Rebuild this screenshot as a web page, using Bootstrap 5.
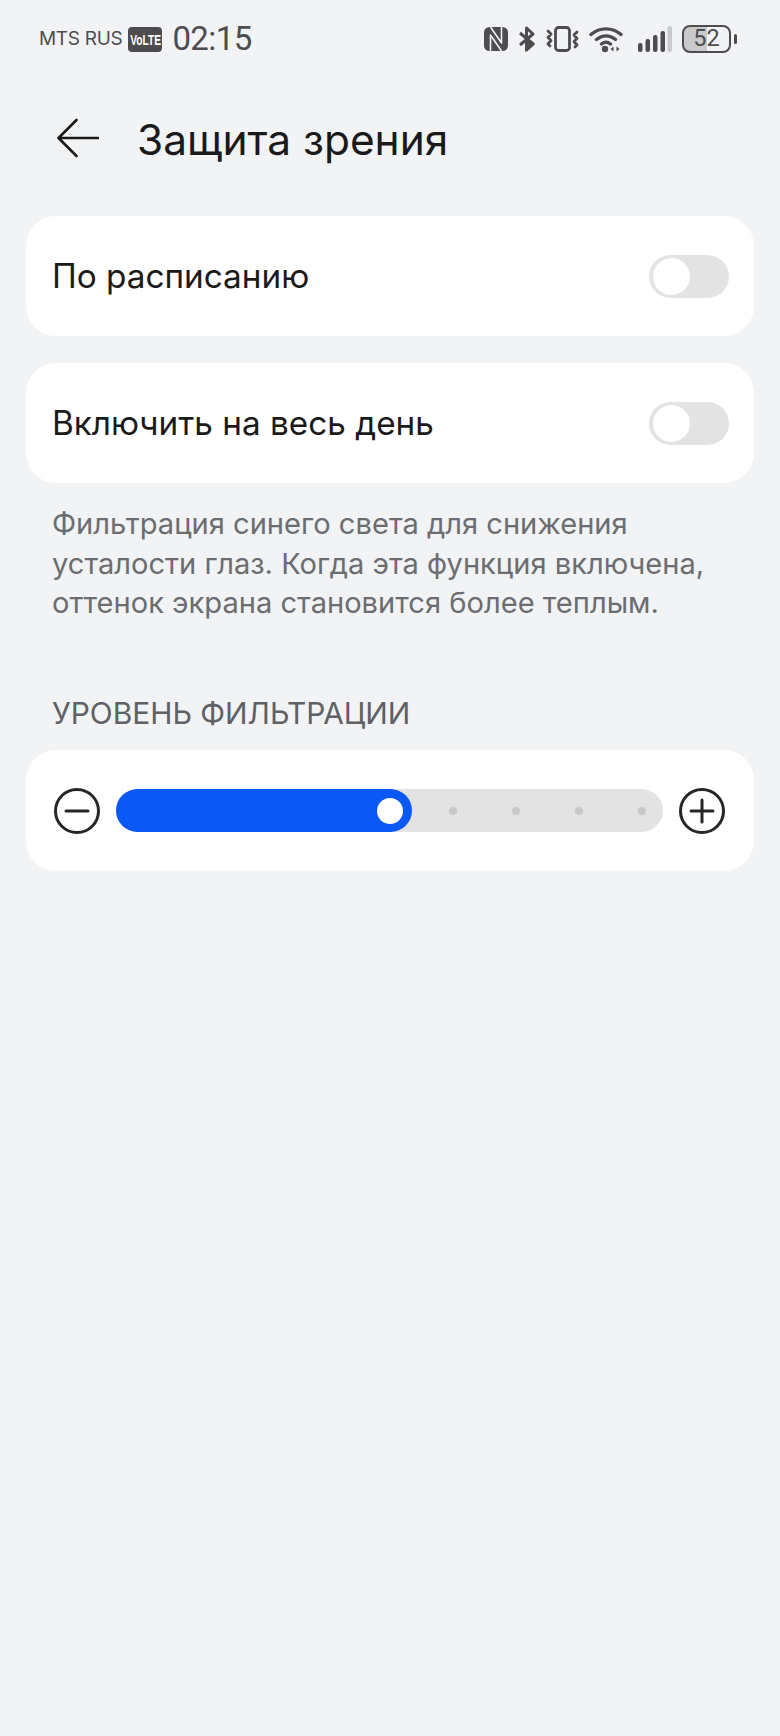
<!DOCTYPE html>
<html lang="ru">
<head>
  <meta charset="UTF-8">
  <meta name="viewport" content="width=device-width, initial-scale=1.0">
  <title>Защита зрения</title>
  <link href="https://cdn.jsdelivr.net/npm/bootstrap@5.3.0/dist/css/bootstrap.min.css" rel="stylesheet">
  <style>
    body {
      background: #f1f3f5;
      font-family: Inter, "Noto Sans", sans-serif;
      color: #1a1a1a;
      min-height: 1736px;
    }
    .status-bar {
      height: 78px;
      padding: 0 43px 0 39px;
      color: #4d4d4f;
    }
    .carrier { font-size: 19px; letter-spacing: -0.3px; }
    .volte {
      width: 34px;
      height: 25px;
      margin: 0 10px 0 6px;
      background: #4d4d4f;
      color: #fff;
      border-radius: 4px;
      overflow: hidden;
      font: 700 15px/25px "Liberation Sans", sans-serif;
    }
    .volte span { display: block; transform: scaleX(0.68); white-space: nowrap; }
    .clock { font-family: Roboto, sans-serif; font-size: 33px; letter-spacing: -0.6px; }
    .sys-icons { gap: 10px; }
    .signal-icon { margin-left: 3px; }
    .battery {
      width: 49px;
      height: 28px;
      border: 2.500px solid #4d4d4f;
      border-radius: 8px;
      font: 400 23.500px/23px Roboto, sans-serif;
      text-align: center;
      background: linear-gradient(90deg, #c9cacc 52%, transparent 52%);
    }
    .battery-nub {
      width: 3px;
      height: 10px;
      margin-left: 3px;
      background: #4d4d4f;
      border-radius: 2px;
    }
    .top-bar {
      height: 124px;
      margin-bottom: 14px;
      padding-left: 57px;
    }
    .top-bar h1 {
      margin: 0 0 0 38px;
      font-size: 42.400px;
      font-weight: 400;
    }
    .panel {
      margin: 0 26px 27px;
      height: 120px;
      background: #fff;
      border-radius: 30px;
      padding: 0 25px 0 26px;
    }
    .panel-label { font-size: 33.300px; padding-top: 2px; }
    .toggle-off {
      width: 80px;
      height: 43px;
      padding: 3px 0 3px 4px;
      background: #e3e3e3;
      border-radius: 22px;
    }
    .toggle-off span {
      display: block;
      width: 37px;
      height: 37px;
      background: #fff;
      border-radius: 50%;
    }
    .hint {
      margin: -6px 52px 0;
      font-size: 29.100px;
      line-height: 39.500px;
      color: #6b6d70;
    }
    .section-title {
      margin: 70.500px 52px 17px;
      font-size: 29.900px;
      line-height: 40px;
      color: #5f6165;
    }
    .level-panel { height: 121px; padding: 0 29px 0 28px; gap: 16px; }
    .level-track {
      height: 43px;
      background: #e3e3e3;
      border-radius: 22px;
    }
    .level-fill {
      background: #0a59f7;
      border-radius: 22px;
      padding-right: 9px;
    }
    .level-knob {
      width: 26px;
      height: 26px;
      background: #fff;
      border-radius: 50%;
    }
    .level-stops { padding-left: 37px; gap: 55px; }
    .level-stops i {
      display: block;
      width: 8px;
      height: 8px;
      background: #c8c8c8;
      border-radius: 50%;
    }
  </style>
</head>
<body>

<!-- status bar -->
<div class="status-bar d-flex align-items-center">
  <span class="carrier">MTS RUS</span>
  <span class="volte d-flex justify-content-center"><span>VoLTE</span></span>
  <span class="clock">02:15</span>
  <div class="sys-icons d-flex align-items-center ms-auto">
    <!-- nfc -->
    <svg width="24" height="24" viewBox="0 0 24 24" fill="none">
      <rect width="24" height="24" rx="5.500" fill="#4d4d4f"/>
      <path d="M6.500 24V8l11 16M17.500 0V16L6.500 0" stroke="#f1f3f5" stroke-width="1.600" stroke-linejoin="round"/>
    </svg>
    <!-- bluetooth -->
    <svg width="18" height="26" viewBox="0 0 18 26" fill="none" stroke="#4d4d4f" stroke-width="3" stroke-linejoin="round">
      <path d="M2 7l13 11-6.500 6V2L15 8 2 19"/>
      <path d="M8.500 13l6.500 5-6.500 6z" fill="#4d4d4f"/>
    </svg>
    <!-- vibrate -->
    <svg width="33" height="26" viewBox="0 0 33 26" fill="none" stroke="#4d4d4f" stroke-width="2.800" stroke-linecap="round" stroke-linejoin="round">
      <rect x="9.500" y="1.500" width="14" height="23" rx="3"/>
      <path d="M2 5l3 3-3 3.500 3 3-3 3.500 2 2M31 6l-3 3 3 3.500-3 3 3 3.500-2 2"/>
    </svg>
    <!-- wifi -->
    <svg width="36" height="28" viewBox="0 0 36 28" fill="none" stroke="#4d4d4f" stroke-width="3.400" stroke-linecap="round">
      <path d="M2 9.500C10.500 2 23.500 2 32 9.500M7.500 14.500c6-4.800 13-4.800 19 0M12.500 19c3-2.200 6-2.200 9 0"/>
      <circle cx="16" cy="24" r="3.200" fill="#4d4d4f" stroke="none"/>
      <path d="M24.500 21.500l-3 2.500 3 2.500zM27.500 21.500l3 2.500-3 2.500z" fill="#4d4d4f" stroke="none"/>
    </svg>
    <!-- signal -->
    <svg class="signal-icon" width="34" height="26" viewBox="0 0 34 26">
      <rect x="0" y="17" width="4.500" height="9" rx="2" fill="#4d4d4f"/>
      <rect x="7.500" y="13" width="4.500" height="13" rx="2" fill="#4d4d4f"/>
      <rect x="15" y="9" width="4.500" height="17" rx="2" fill="#4d4d4f"/>
      <rect x="22.500" y="5" width="4.500" height="21" rx="2" fill="#4d4d4f"/>
      <rect x="29.500" y="0" width="4.500" height="26" rx="2" fill="#c9cacc"/>
    </svg>
    <div class="d-flex align-items-center">
      <div class="battery">52</div>
      <div class="battery-nub"></div>
    </div>
  </div>
</div>

<!-- title row -->
<div class="top-bar d-flex align-items-center">
  <svg class="mb-1" width="42" height="40" viewBox="0 0 42 40" fill="none" stroke="#1a1a1a" stroke-width="2.600" stroke-linecap="round" stroke-linejoin="round">
    <path d="M19.500 2L1.500 20l18 18M1.500 20H41"/>
  </svg>
  <h1>Защита зрения</h1>
</div>

<div class="panel d-flex align-items-center justify-content-between">
  <span class="panel-label">По расписанию</span>
  <div class="toggle-off"><span></span></div>
</div>

<div class="panel d-flex align-items-center justify-content-between">
  <span class="panel-label">Включить на весь день</span>
  <div class="toggle-off"><span></span></div>
</div>

<p class="hint">Фильтрация синего света для снижения усталости глаз. Когда эта функция включена, оттенок экрана становится более теплым.</p>

<div class="section-title">УРОВЕНЬ ФИЛЬТРАЦИИ</div>

<div class="panel level-panel d-flex align-items-center">
  <svg class="flex-shrink-0" width="46" height="46" viewBox="0 0 46 46" fill="none" stroke="#262626" stroke-width="3" stroke-linecap="round">
    <circle cx="23" cy="23" r="21.500"/>
    <path d="M12 23h22"/>
  </svg>
  <div class="level-track d-flex flex-grow-1">
    <div class="level-fill d-flex align-items-center justify-content-end flex-shrink-0" style="width: 296px">
      <div class="level-knob"></div>
    </div>
    <div class="level-stops d-flex align-items-center">
      <i></i><i></i><i></i><i></i>
    </div>
  </div>
  <svg class="flex-shrink-0" width="46" height="46" viewBox="0 0 46 46" fill="none" stroke="#262626" stroke-width="3" stroke-linecap="round">
    <circle cx="23" cy="23" r="21.500"/>
    <path d="M12 23h22M23 12v22"/>
  </svg>
</div>

<script src="https://cdn.jsdelivr.net/npm/bootstrap@5.3.0/dist/js/bootstrap.bundle.min.js"></script>
</body>
</html>
